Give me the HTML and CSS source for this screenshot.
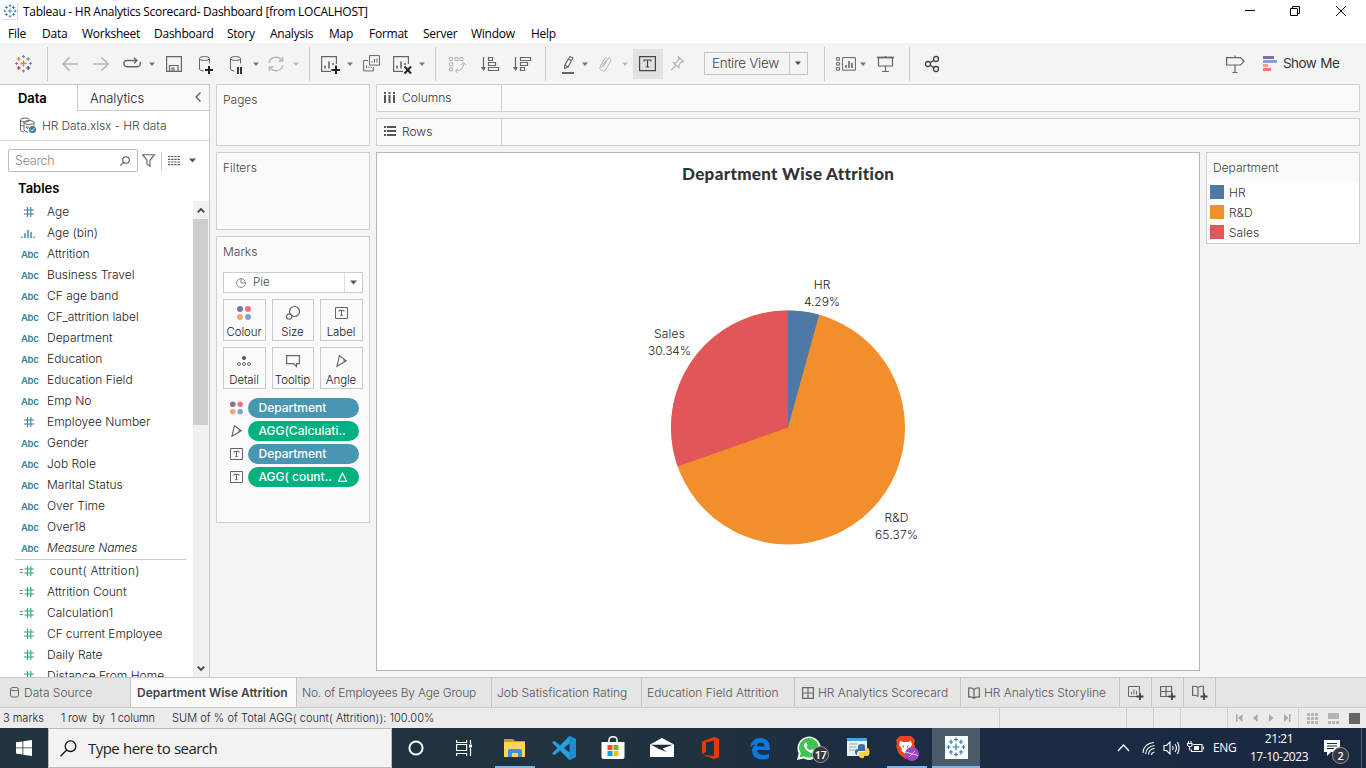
FILE: index.html
```html
<!DOCTYPE html>
<html lang="en">
<head>
<meta charset="utf-8">
<title>Tableau - HR Analytics Scorecard- Dashboard</title>
<link rel="stylesheet" href="styles.css">
</head>
<body>
<svg class="defs" width="0" height="0">
  <defs>
    <symbol id="caret" viewBox="0 0 6 20"><path d="M0 8.5h6l-3 3.5z" fill="currentColor"/></symbol>
    <symbol id="tbox" viewBox="0 0 13 12"><path d="M.5.5h12v11H.5z" fill="none" stroke="#666"/><path d="M4 4.6V3.4h5v1.2M6.5 3.4v5.2M5.3 8.6h2.4" fill="none" stroke="#666"/></symbol>
    <symbol id="dots" viewBox="0 0 14 14"><circle cx="3" cy="3" r="3" fill="#86709a"/><circle cx="11" cy="3" r="3" fill="#f8707e"/><circle cx="3" cy="11" r="3" fill="#f5a678"/><circle cx="11" cy="11" r="3" fill="#80a5cf"/></symbol>
    <symbol id="angle" viewBox="0 0 11 12"><path d="M3.4.7 10.3 5.800 .9 11.300zM7.900 4q.8 2-.4 3.700" fill="none" stroke="#666" stroke-width="1.1"/></symbol>
    <symbol id="hash" viewBox="0 0 10 10"><path d="M3.500 0v10M6.800 0v10M0 3h10M0 7h10" fill="none" stroke="currentColor" stroke-width="1.100"/></symbol>
    <symbol id="hasheq" viewBox="0 0 14 10"><path d="M7.500 0v10M10.800 0v10M4.500 3H14M4.500 7H14M0 3.500h3M0 6.500h3" fill="none" stroke="currentColor" stroke-width="1.100"/></symbol>
    <symbol id="bars" viewBox="0 0 14 10"><path d="M.8 8.500V10M4 5v5M7 2v8M10 4v6M13 8.500V10" fill="none" stroke="currentColor" stroke-width="1.400"/></symbol>
    <symbol id="book" viewBox="0 0 12 12"><path d="M6 2.500Q4 .7.700 1v9Q4 9.700 6 11.300 8 9.700 11.300 10V1Q8 .7 6 2.500zV11" fill="none" stroke="#666" stroke-width="1.200"/></symbol>
    <symbol id="gridico" viewBox="0 0 12 12"><path d="M.6.6h10.800v10.800H.6zM6 .6v10.800M.6 6h10.800" fill="none" stroke="#666" stroke-width="1.200"/></symbol>
    <symbol id="plusses" viewBox="0 0 20 20"><path d="M10 6.500v7M6.500 10h7M10 .500v4M8 2.500h4M10 15.500v4M8 17.500h4M2.500 8v4M.500 10h4M17.500 8v4M15.500 10h4M5 2.500v4.500M2.700 5h4.500M15 2.500v4.500M12.800 5h4.500M5 13v4.500M2.700 15h4.500M15 13v4.500M12.800 15h4.500" fill="none" stroke="currentColor" stroke-width="1.200"/></symbol>
  </defs>
</svg>

<header class="titlebar">
  <span class="app-icon"><svg width="14" height="14"><use href="#plusses"/></svg></span>
  <span class="title">Tableau - HR Analytics Scorecard- Dashboard [from LOCALHOST]</span>
  <svg class="winctl" width="104" height="12" fill="none" stroke="#000"><path d="M0 5.500h10M45.500 3.500h7v7h-7zM47.500 3.500v-2h7v7h-2M91 1l10 10M101 1 91 11"/></svg>
</header>
<nav class="menubar"><span>File</span><span>Data</span><span>Worksheet</span><span>Dashboard</span><span>Story</span><span>Analysis</span><span>Map</span><span>Format</span><span>Server</span><span>Window</span><span>Help</span></nav>

<div class="toolbar">
  <svg width="18" height="20" fill="none" stroke-width="1.100"><path d="M8.500 6.500v6M5.500 9.500h6" stroke="#e8762c" stroke-width="1.300"/><path d="M3.800 3v4M1.800 5h4" stroke="#e8762c"/><path d="M13.200 3v4M11.200 5h4" stroke="#5b8ba6"/><path d="M3.800 12v4M1.800 14h4" stroke="#c72037"/><path d="M13.200 12v4M11.200 14h4" stroke="#1f447e"/><path d="M8.500 1v3M7 2.500h3M8.500 15.500v3M7 17h3" stroke="#5b8ba6"/><path d="M1.500 8v3M0 9.500h3M15.500 8v3M14 9.500h3" stroke="#7b7fb0"/></svg>
  <i class="sep"></i>
  <svg class="pale" width="16" height="20"><path d="M16 10H1M7.500 3.500 1 10l6.500 6.500" stroke-width="1.500"/></svg>
  <svg class="pale" width="16" height="20"><path d="M0 10h15M8.500 3.500 15 10l-6.500 6.500" stroke-width="1.500"/></svg>
  <svg width="19" height="20"><path d="M14 12.800a3.100 3.100 0 0 0 2.800-4.800M14 12.800H4a3.100 3.100 0 0 1 0-6.300H13.500M11 3.700l3 2.800-3 2.800" stroke-width="1.400"/></svg>
  <svg class="car" width="6" height="20"><use href="#caret"/></svg>
  <svg width="16" height="20"><path d="M.6 2.600h14.800v14.800H.6zM3.500 17v-5.500h8.500V17M6 17v-3h2v3" stroke-width="1.200"/></svg>
  <svg width="16" height="20"><ellipse cx="6.500" cy="4.500" rx="5" ry="2"/><path d="M1.500 4.500v10.500q0 2 4 2M11.500 4.500v5"/><path d="M11 12v8M7 16h8" stroke="#222" stroke-width="2"/></svg>
  <svg width="16" height="20"><ellipse cx="6.500" cy="4.500" rx="5" ry="2"/><path d="M1.500 4.500v10.500q0 2 4 2M11.500 4.500v5"/><path d="M9 13v7M12 13v7" stroke="#222" stroke-width="1.800"/></svg>
  <svg class="car" width="6" height="20"><use href="#caret"/></svg>
  <svg class="pale" width="18" height="20"><path d="M2 9a7 6.500 0 0 1 13-2.500M15.800 3v4h-4M16 11a7 6.500 0 0 1-13 2.500M2.200 17v-4h4" stroke-width="1.300"/></svg>
  <svg class="car lite" width="6" height="20"><use href="#caret"/></svg>
  <i class="sep"></i>
  <svg width="20" height="20"><path d="M10 17.400H.6V2.600h14.800v7.500" stroke-width="1.200"/><path d="M4 14.500v-3M8 14.500v-7M12 11V9" stroke-width="1.600"/><path d="M15 11.500v8.500M10.500 16h8.500" stroke="#222" stroke-width="2"/></svg>
  <svg class="car" width="6" height="20"><use href="#caret"/></svg>
  <svg width="18" height="20"><path d="M6.500 1.600h10v9.500h-10zM5 6.500H.6v10.400h9.800V13M9 8.500V7M11.500 8.500V5M14 8.500v-4M3.500 14v-2.500M6 14v-1.500M8.300 14v-1"/></svg>
  <svg width="20" height="20"><path d="M10 17.400H.6V2.600h14.800v7.500" stroke-width="1.200"/><path d="M4 14.500v-3M8 14.500v-7M12 11V9" stroke-width="1.600"/><path d="m11.500 12.500 6.500 7M18 12.500l-6.500 7" stroke="#222" stroke-width="2"/></svg>
  <svg class="car" width="6" height="20"><use href="#caret"/></svg>
  <i class="sep"></i>
  <svg class="pale" width="17" height="20"><path d="M.6 3.500h3v3h-3zM6 3.500h3v3H6zM11 3.500h3v3h-3zM.6 8.800h3v3h-3zM.6 13.800h3v3h-3zM14.500 9.500q.5 6.500-7.500 7.500M12 11l2.500-2.500L17 11M9 14.300 6.500 17 9 19.500"/></svg>
  <svg width="19" height="20"><path d="M2.500 3v11M7.500 3.500h4v3h-4zM7.500 8.500h7v3h-7zM7.500 13.500h10v3h-10z" stroke-width="1.200"/><path d="M0 13h5l-2.500 4z" fill="#666" stroke="none"/></svg>
  <svg width="19" height="20"><path d="M2.500 3v11M7.500 3.500h10v3h-10zM7.500 8.500h7v3h-7zM7.500 13.500h4v3h-4z" stroke-width="1.200"/><path d="M0 13h5l-2.500 4z" fill="#666" stroke="none"/></svg>
  <i class="sep"></i>
  <svg width="14" height="20"><path d="M9 2.500 12 4 7 13l-3.500 1.500.3-3.500zM4 11l3 2M7.500 5l3.500 2" stroke-width="1.100"/><path d="M1 19h12" stroke-width="2"/></svg>
  <svg class="car" width="6" height="20"><use href="#caret"/></svg>
  <svg class="pale" width="14" height="20"><path d="m5 13 4.500-8q1.500-2 3 0 .8 1-.2 3l-4.500 7.500q-2 2.500-4.500 1-2.500-2-.8-4.500L6.500 5Q7.500 3 9 4M3.500 13.500 8 6" /></svg>
  <svg class="car lite" width="6" height="20"><use href="#caret"/></svg>
  <span class="toggled"><svg width="17" height="20"><path d="M.6 2.600h15.800v14H.6zM5 7.500V6h7v1.500M8.500 6v7M6.800 13h3.400" stroke-width="1.200"/></svg></span>
  <svg class="pale" width="13" height="20"><path d="m7.500 3 5 4.500-2 .3-2.500 3v3L2.200 8.800l3-.2L8 5.500zM4.800 11.500.5 16" stroke-width="1.200"/></svg>
  <span class="fit"><b class="ui">Entire View</b><em><svg class="car dark" width="6" height="20"><use href="#caret"/></svg></em></span>
  <i class="sep"></i>
  <svg width="20" height="20"><path d="M.6 3.600h3v2.600h-3zM.6 8.600h3v2.600h-3zM.6 13.600h3v2.600h-3zM6.600 3.600h12.800v12.600H6.600z"/><path d="M10 14v-3M13 14V7M16 14V9" stroke-width="1.600"/></svg>
  <svg class="car" width="6" height="20"><use href="#caret"/></svg>
  <svg width="17" height="20"><path d="M0 3.500h17" stroke-width="1.800"/><path d="M1.500 4v8h14V4M8.500 2v1M8.500 12v5.500M5 17.500h7" stroke-width="1.200"/></svg>
  <i class="sep"></i>
  <svg width="15" height="20"><g stroke="#444" stroke-width="1.300"><circle cx="3" cy="10" r="2.500"/><circle cx="11" cy="5" r="2.500"/><circle cx="11" cy="15" r="2.500"/><path d="m5.200 8.700 3.600-2.300M5.200 11.300l3.600 2.300"/></g></svg>
  <svg width="19" height="20"><path d="M.6 3.600h14L18 7.300 14.600 11H.6zM9 1.500v2M9 11v7.500M6.500 18.500h5" stroke-width="1.200"/></svg>
  <span class="showme"><svg width="15" height="20"><path d="M1 2h11v3H1z" fill="#86709a"/><path d="M1 6h14v3H1z" fill="#80a5cf"/><path d="M1 10h5v3H1z" fill="#f5a678"/><path d="M1 14h8v3H1z" fill="#f8707e"/></svg><b class="ui">Show Me</b></span>
</div>

<main class="workspace">
  <aside class="data-pane">
    <div class="pane-tabs"><b class="on ui">Data</b><span class="ui">Analytics</span><svg width="6" height="10"><path d="M5.500.500 1 5l4.500 4.500" fill="none" stroke="#555" stroke-width="1.200"/></svg></div>
    <div class="source"><svg width="17" height="17" fill="none" stroke="#666"><ellipse cx="5" cy="3" rx="4.500" ry="2"/><path d="M.5 3v10q0 1.500 3.500 2M.5 8q1 1 3 1"/><ellipse cx="9" cy="5.500" rx="5" ry="2"/><path d="M4 5.500V13q1 2 4 2M14 5.500V9M6 10h3M8 12l-2-2"/><circle cx="12.500" cy="12.500" r="3.600" fill="#3a7fa5" stroke="none"/><path d="m10.800 12.500 1.300 1.300 2.200-2.500" stroke="#fff"/></svg><span class="ui">HR Data.xlsx - HR data</span></div>
    <div class="find">
      <div class="box"><span class="ui">Search</span><svg width="10" height="10" fill="none" stroke="#555" stroke-width="1.100"><circle cx="6" cy="4" r="3.300"/><path d="M3.700 6.300.5 9.500"/></svg></div>
      <svg width="13" height="13" fill="none" stroke="#666" stroke-width="1.100"><path d="M.7.700h11.600L8 6.300v6L5 10V6.300z"/></svg>
      <i></i>
      <svg width="12" height="9" stroke="#555" stroke-width="1.200"><path d="M0 .5h12M0 3.300h12M0 6h12M0 8.700h12" stroke-dasharray="2.300 .9"/></svg>
      <svg class="down" width="7" height="5"><path d="M0 .5h7L3.500 4.500z" fill="#555"/></svg>
    </div>
    <h2 class="ui">Tables</h2>
    <div class="fields">
      <ul class="ui">
        <li class="dim"><svg width="10" height="10"><use href="#hash"/></svg>Age</li>
        <li class="dim"><svg width="14" height="10"><use href="#bars"/></svg>Age (bin)</li>
        <li><b>Abc</b>Attrition</li>
        <li><b>Abc</b>Business Travel</li>
        <li><b>Abc</b>CF age band</li>
        <li><b>Abc</b>CF_attrition label</li>
        <li><b>Abc</b>Department</li>
        <li><b>Abc</b>Education</li>
        <li><b>Abc</b>Education Field</li>
        <li><b>Abc</b>Emp No</li>
        <li class="dim"><svg width="10" height="10"><use href="#hash"/></svg>Employee Number</li>
        <li><b>Abc</b>Gender</li>
        <li><b>Abc</b>Job Role</li>
        <li><b>Abc</b>Marital Status</li>
        <li><b>Abc</b>Over Time</li>
        <li><b>Abc</b>Over18</li>
        <li><b>Abc</b><em>Measure Names</em></li>
        <li class="rule"></li>
        <li class="mea calc first"><svg width="14" height="10"><use href="#hasheq"/></svg>&nbsp;count( Attrition)</li>
        <li class="mea calc"><svg width="14" height="10"><use href="#hasheq"/></svg>Attrition Count</li>
        <li class="mea calc"><svg width="14" height="10"><use href="#hasheq"/></svg>Calculation1</li>
        <li class="mea tight"><svg width="10" height="10"><use href="#hash"/></svg>CF current Employee</li>
        <li class="mea"><svg width="10" height="10"><use href="#hash"/></svg>Daily Rate</li>
        <li class="mea"><svg width="10" height="10"><use href="#hash"/></svg>Distance From Home</li>
      </ul>
      <div class="scroll">
        <svg width="8" height="5"><path d="M.7 4.300 4 1l3.300 3.300" fill="none" stroke="#444" stroke-width="1.800"/></svg>
        <i></i>
        <svg width="8" height="5"><path d="M.7.700 4 4 7.300.700" fill="none" stroke="#444" stroke-width="1.800"/></svg>
      </div>
    </div>
  </aside>

  <section class="shelves ui">
    <div class="card pages">Pages</div>
    <div class="card filters">Filters</div>
    <div class="card marks">
      <h3>Marks</h3>
      <div class="marktype"><svg width="10" height="10" fill="none" stroke="#888"><circle cx="5" cy="5" r="4.400"/><path d="M5 1v4h4"/></svg><span>Pie</span><em><svg width="7" height="5"><path d="M0 .5h7L3.500 4.500z" fill="#555"/></svg></em></div>
      <div class="markgrid">
        <div><svg width="14" height="14"><use href="#dots"/></svg>Colour</div>
        <div><svg width="14" height="14" fill="none" stroke="#666" stroke-width="1.200"><circle cx="8.500" cy="5.500" r="5"/><circle cx="3.200" cy="10.500" r="2.700" fill="#fafafa"/></svg>Size</div>
        <div><svg width="13" height="14"><use href="#tbox"/></svg>Label</div>
        <div><svg width="14" height="14" fill="none" stroke="#666"><circle cx="7" cy="4" r="2" fill="#555" stroke="none"/><circle cx="2" cy="10" r="1.500"/><circle cx="7" cy="10" r="1.500"/><circle cx="12" cy="10" r="1.500"/></svg>Detail</div>
        <div><svg width="14" height="14" fill="none" stroke="#666" stroke-width="1.200"><path d="M.6 1.600h12.800v8H10.500v3L7.500 9.600H.6z"/></svg>Tooltip</div>
        <div><svg width="11" height="14"><use href="#angle"/></svg>Angle</div>
      </div>
      <div class="pill"><svg width="15" height="14"><use href="#dots"/></svg><span class="blue">Department</span></div>
      <div class="pill"><svg width="11" height="12"><use href="#angle"/></svg><span>AGG(Calculati..</span></div>
      <div class="pill"><svg width="13" height="12"><use href="#tbox"/></svg><span class="blue">Department</span></div>
      <div class="pill"><svg width="13" height="12"><use href="#tbox"/></svg><span>AGG( count..<svg width="9" height="10"><path d="M4.500 1 8.500 9.300H.500z" fill="none" stroke="#fff" stroke-width="1.200"/></svg></span></div>
    </div>
  </section>

  <section class="canvas">
    <div class="shelf ui"><div><svg width="12" height="11" fill="#555"><path d="M0 0h2v2H0zM4.500 0h2v2h-2zM9 0h2v2H9zM0 3h2v8H0zM4.500 3h2v8h-2zM9 3h2v8H9z"/></svg>Columns</div></div>
    <div class="shelf ui"><div><svg width="12" height="11" fill="#555"><path d="M0 0h2v2H0zM0 4h2v2H0zM0 8h2v2H0zM3 0h9v2H3zM3 4h9v2H3zM3 8h9v2H3z"/></svg>Rows</div></div>
    <div class="viewrow">
      <div class="view">
        <svg width="822" height="517" viewBox="377 153 822 517">
          <text class="charttitle" x="788" y="180" textLength="212">Department Wise Attrition</text>
          <circle cx="788" cy="427.500" r="117" fill="#f28e2b"/>
          <path d="M788 427.500V310.500A117 117 0 0 1 819.150 314.720z" fill="#4e79a7"/>
          <path d="M788 427.500 677.730 466.500A117 117 0 0 1 788 310.500z" fill="#e15759"/>
          <g class="ui lab">
            <text x="822" y="289">HR</text><text x="822" y="306" textLength="36">4.29%</text>
            <text x="669.500" y="338" textLength="31">Sales</text><text x="669.500" y="355" textLength="43">30.34%</text>
            <text x="896.500" y="522" textLength="24">R&amp;D</text><text x="896.500" y="539" textLength="43">65.37%</text>
          </g>
        </svg>
      </div>
      <div class="legend ui"><h3>Department</h3><p><i class="c1"></i><span>HR</span></p><p><i class="c2"></i><span>R&amp;D</span></p><p><i class="c3"></i><span>Sales</span></p></div>
    </div>
  </section>
</main>

<div class="sheets ui">
  <span><svg width="9" height="12" fill="none" stroke="#666"><rect x=".5" y=".5" width="8" height="9.500" rx="2"/><path d="M.5 3q4 1.500 8 0"/></svg>Data Source</span>
  <span class="on">Department Wise Attrition</span>
  <span class="emp">No. of Employees By Age Group</span>
  <span>Job Satisfication Rating</span>
  <span>Education Field Attrition</span>
  <span class="dash"><svg width="12" height="12"><use href="#gridico"/></svg>HR Analytics Scorecard</span>
  <span class="dash"><svg width="12" height="12"><use href="#book"/></svg>HR Analytics Storyline</span>
  <span class="add"><svg width="16" height="16"><path d="M9 11.500H.500V1.500h11V8M3.500 9.500V7M6 9.500V4.500M8.500 9.500V6" fill="none" stroke="#666"/><path d="M12 8v7M8.500 11.500h7" stroke="#444" stroke-width="1.800"/></svg></span>
  <span class="add"><svg width="16" height="16"><path d="M9 11.500H.600V1.500h11V8M6 1.500v10M.6 6.500h11" fill="none" stroke="#666" stroke-width="1.200"/><path d="M12 8v7M8.500 11.500h7" stroke="#444" stroke-width="1.800"/></svg></span>
  <span class="add"><svg width="16" height="16"><path d="M6 2.500Q4 1 .6 1.300v9Q4 10 6 11.500M6 2.500Q8 1 11.400 1.300V8M6 2.500v9" fill="none" stroke="#666" stroke-width="1.200"/><path d="M12 8v7M8.500 11.500h7" stroke="#444" stroke-width="1.800"/></svg></span>
</div>
<div class="status ui">
  <span class="s1">3 marks</span><span class="s2">1 row&nbsp; by&nbsp; 1 column</span><span class="s3">SUM of % of Total AGG( count( Attrition)): 100.00%</span>
  <div class="cells"><i></i><i></i><i></i><i></i>
    <i><svg width="56" height="8" fill="#aaa"><path d="M0 0h1.500v8H0zM6.500 0v8L2 4zM21.500 0v8L17 4zM33 0v8l4.500-4zM48 0v8l4.500-4zM53 0h1.500v8H53z"/></svg></i>
    <i><svg width="54" height="11"><path d="M0 0h3v3H0zM4 0h3v3H4zM8 0h3v3H8zM0 4h3v3H0zM4 4h3v3H4zM8 4h3v3H8zM0 8h3v3H0zM4 8h3v3H4zM8 8h3v3H8zM21 0h11v6H21zM21 8h3v3h-3zM25 8h3v3h-3zM29 8h3v3h-3z" fill="#b5b5b5"/><path d="M42 0h11v11H42z" fill="#666"/></svg></i>
  </div>
</div>

<footer class="taskbar">
  <div class="start"><svg width="16" height="16" fill="#fff"><path d="M0 2.300 6.500 1.400v6.100H0zM7.300 1.300 16 0v7.500H7.300zM0 8.300h6.500v6.200L0 13.600zM7.300 8.300H16V16l-8.700-1.300z"/></svg></div>
  <div class="search"><svg width="17" height="17" fill="none" stroke="#111" stroke-width="1.300"><circle cx="10.500" cy="6.200" r="5.300"/><path d="M6.700 10 .5 16.200"/></svg><span>Type here to search</span></div>
  <div class="apps">
    <div><svg width="16" height="16"><circle cx="8" cy="8" r="6.600" fill="none" stroke="#fff" stroke-width="2"/></svg></div>
    <div class="taskview"><svg width="17" height="16" fill="none" stroke="#fff" stroke-width="1.200"><path d="M.6 0v2.500h10V0M.6 4.500h10v6H.6zM.6 16v-2.500h10V16M14.500 0v4M14.500 8v8"/><path d="M13 4.500h3v3h-3z" fill="#fff" stroke="none"/></svg></div>
    <div class="run"><svg width="24" height="24"><path d="M1 3h9l2 2h10v3H1z" fill="#d79b13"/><path d="M1 6h21v15H1z" fill="#ffd65c"/><path d="M5 21v-6q0-2 2-2h10q2 0 2 2v6h-4v-4H9v4z" fill="#3c93dc"/></svg></div>
    <div><svg width="24" height="24"><path d="M17.500 0 24 3v18l-6.500 3L8 14.500 2.500 19 0 17.500 5.500 12 0 6.500 2.500 5 8 9.500zM18 7l-6 5 6 5z" fill="#249fe3"/><path d="M17.500 0 24 3v18l-6.500 3z" fill="#1e8bd0"/></svg></div>
    <div><svg width="24" height="24"><path d="M8 7V4q0-3.300 4-3.300T16 4v3" fill="none" stroke="#fff" stroke-width="1.500"/><path d="M.5 6h23v15q0 2-2 2h-19q-2 0-2-2z" fill="#fff"/><path d="M6.500 9h5v5h-5z" fill="#f04e1f"/><path d="M12.500 9h5v5h-5z" fill="#7db700"/><path d="M6.500 15h5v5h-5z" fill="#00a3ee"/><path d="M12.500 15h5v5h-5z" fill="#ffb800"/></svg></div>
    <div><svg width="24" height="24"><path d="M0 8.500 12 2l12 6.500V21H0z" fill="#fff"/><path d="M1 8.800h22L12.500 12.500l4 3.500L9 13z" fill="#1e2f3c"/></svg></div>
    <div><svg width="22" height="24"><path d="M2 5.500 14 1l5 1.700v18.600L14 23 2 18.500l12 1.500V4.500L6 6.500V16l-4 2z" fill="#e03c05"/></svg></div>
    <div><svg width="24" height="24"><path d="M2 11.500Q3.500 2 12.500 2 22 2.500 22 12v2H9q.5 5 6.500 5 3.300 0 5.500-1.500V22q-3 1.500-7 1.500Q4.500 23 4 15q0-4 4-6.500Q4.500 8.500 2 11.500zM9 10.500h7.500q0-4-3.700-4T9 10.500z" fill="#0a79dc"/></svg></div>
    <div class="wa"><svg width="24" height="24"><path d="M0 24 1.700 17.500A11.700 11.700 0 1 1 6.500 22.500z" fill="#fff"/><path d="m2.500 21.500 1.300-4.300a9.700 9.700 0 1 1 3.300 3z" fill="#3fc351"/><path d="M8.500 6.500q-2 1-1.500 3.500 1.500 5 7 7 3 .5 4-2l-3-2-1.500 1.500q-3-1-4-4l1-1.500-1.200-2.500z" fill="#fff"/></svg><b>17</b></div>
    <div><svg width="24" height="24"><path d="M1 2h20v18H1z" fill="#e8f0f5"/><path d="M1 2h20v3H1z" fill="#4aa3dc"/><path d="M3 8h8M3 11h7M3 14h6" stroke="#9aa"/><path d="M12 15V10q0-2 4-2 3 0 3 2v5h-6q-2 0-2 4-2.500-1-2-4 0-2 3-2z" fill="#3870a5"/><path d="M19 12h2q2.500 0 2.500 4T21 20h-3v1.500q-1.500 1.500-4 0-1.500-.5-1-4 0-1.500 2-1.500h4z" fill="#fbd043"/></svg></div>
    <div class="run"><svg width="24" height="24"><path d="M5 0h11l4 4-1 4 1 2-3 8-6.500 5L4 18 1 10l1-2-1-4z" fill="#f1451f"/><path d="m5 5 3 1h5l3-1 1 4-3 4 .5 2-4 3-4-3L7 13 4 9z" fill="#fff"/><path d="m7 9 2 1-.5 2zM14 9l-2 1 .5 2z" fill="#f1451f"/><circle cx="17" cy="18" r="7" fill="#9b47c7"/><path d="M10.500 16 23 19.500M14 21l6-6" stroke="#f5b8e8"/></svg></div>
    <div class="active"><span><svg width="20" height="20"><use href="#plusses"/></svg></span></div>
  </div>
  <div class="tray">
    <svg width="100" height="18" fill="none" stroke="#fff" stroke-width="1.300"><path d="m1 12 5.500-6 5.500 6"/><path d="M26 14Q26.500 4.500 37 3.500M28.500 15Q29.500 7.500 37.500 6.500M31.500 15.500q.5-5.500 6-6M34.500 16q0-2.500 3-3" stroke-width="1.100"/><path d="M47 6.500h2.500L53 3v12l-3.500-3.500H47zM55.500 7q1.500 2 0 4M58 5q3 4 0 8M60.500 3q3 6 0 12" stroke-width="1.100"/><path d="M76 5.500h9v7H74.500V10.500M86.500 7.500v3M71.500 2v2M74 2v2M70.500 4.500H75v2q-2.200 2.500-4.500 0zM72.700 8v3.500" stroke-width="1.100"/><path d="M77 7h5v4h-5z" fill="#fff" stroke="none"/></svg>
    <span class="lang">ENG</span>
    <span class="clock">21:21<br>17-10-2023</span>
    <span class="note"><svg width="17" height="17"><path d="M0 0h16v12H7l-4 4v-4H0z" fill="#fff"/><path d="M3 3.500h10M3 6h10M3 8.500h7" stroke="#1b2a40"/></svg><b>2</b></span>
    <i></i>
  </div>
</footer>
</body>
</html>
```

FILE: styles.css
```css
* { box-sizing: border-box; }
body { margin: 0; width: 1366px; height: 768px; overflow: hidden; background: #f4f4f4; font: 12px/1 "Open Sans", "Noto Sans", sans-serif; color: #000; display: flex; flex-direction: column; }
svg { display: block; flex: none; overflow: visible; }
h2, h3, p, ul { margin: 0; padding: 0; }
i, em { font-style: normal; }
.defs { position: absolute; }
.ui { font-family: Inter, Roboto, sans-serif; font-weight: 300; }

.titlebar { height: 22px; background: #fff; display: flex; align-items: center; padding: 0 17px 0 3px; font-size: 12px; letter-spacing: -.27px; }
.app-icon { width: 15px; height: 17px; margin-right: 5px; padding-top: 1px; border: 1px solid #ddd; border-left: 0; border-top: 0; color: #2c7fb0; }
.title { padding-top: 2px; }
.winctl { margin-left: auto; }
.menubar { height: 21px; background: #fff; display: grid; grid-template-columns: 34px 40px 72px 73px 43px 59px 40px 54px 48px 60px 40px; align-items: center; padding: 2px 0 0 8px; font-size: 12px; letter-spacing: -.25px; }

.toolbar { height: 41px; padding: 11px 0 0 15px; display: grid; align-items: start; grid-template-columns: 32px 15px 31px 30px 26px 17px 32px 31px 24px 14px 26px 16px 12px 26px 16px 30px 26px 16px 14px 32px 32px 32px 16px 21px 16px 24px 11px 38px 33px 120px 12px 24px 17px 32px 16px 301px 36px 100px; }
.toolbar svg { fill: none; stroke: #666; }
.toolbar svg.pale { stroke: #b5b5b5; }
.toolbar svg.car { stroke: none; color: #777; }
.toolbar svg.lite { color: #bbb; }
.toolbar svg.dark { color: #444; }
.sep { width: 1px; height: 34px; margin-top: -7px; background: #ccc; }
.toggled { width: 30px; height: 30px; margin-top: -5px; padding: 5px 0 0 6px; background: #e1e1e1; }
.toolbar .toggled svg { stroke: #444; }
.fit { width: 104px; height: 23px; margin-top: -2px; border: 1px solid #c4c4c4; display: flex; align-items: center; color: #444; }
.fit b { font-size: 13.500px; font-weight: 300; padding: 1px 0 0 7px; flex: 1; letter-spacing: -.3px; }
.fit em { width: 18px; height: 21px; border-left: 1px solid #ccc; padding-left: 5px; }
.showme { display: flex; align-items: center; gap: 6px; }
.toolbar .showme svg { stroke: none; }
.showme b { font-size: 13.500px; font-weight: 400; color: #333; letter-spacing: -.7px; word-spacing: 1px; letter-spacing: -.6px; }

.workspace { height: 593px; display: flex; }
.data-pane { width: 210px; background: #fff; border: solid #c9c9c9; border-width: 1px 1px 0 0; display: flex; flex-direction: column; }
.pane-tabs { height: 26px; display: flex; flex: none; font-size: 13px; line-height: 26px; letter-spacing: -.1px; }
.pane-tabs .on { width: 77px; padding-left: 18px; font-weight: 600; }
.pane-tabs span { flex: 1; padding-left: 12px; background: #fafafa; border: solid #ccc; border-width: 0 0 1px 1px; color: #222; }
.pane-tabs svg { margin: 7px 8px 0 -14px; }
.source { height: 30px; flex: none; border-bottom: 1px solid #ddd; display: flex; align-items: center; padding-left: 20px; gap: 5px; font-size: 12px; color: #444; letter-spacing: -.1px; }
.find { height: 40px; flex: none; padding: 8px 0 9px 8px; display: flex; align-items: center; }
.find .box { width: 130px; height: 23px; border: 1px solid #bbb; border-radius: 2px; display: flex; align-items: center; justify-content: space-between; padding: 1px 7px 0 6px; color: #888; font-size: 12.500px; letter-spacing: -.25px; margin-right: 4px; }
.find i { width: 1px; height: 18px; background: #ccc; margin: 0 6px 0 6px; }
.find .down { margin-left: 9px; }
h2 { height: 20px; flex: none; font-size: 13px; padding-left: 18px; font-weight: 600 !important; line-height: 15px; }
.fields { flex: 1; min-height: 0; display: flex; }
.fields ul { width: 193px; height: 476px; overflow: hidden; list-style: none; font-size: 12px; color: #222; }
.fields li { height: 21px; line-height: 21px; display: flex; align-items: center; padding-left: 21px; white-space: nowrap; }
.fields li b { width: 26px; font-size: 9.500px; font-weight: 600; color: #3a7f9c; padding-top: 1px; letter-spacing: -.3px; }
.fields li em { font-style: italic; letter-spacing: -.15px; }
.fields li svg { width: 10px; margin: 0 13px 0 3px; color: #3a7f9c; }
.fields li svg[width="14"] { width: 14px; margin: 0 12px 0 0; }
.fields li.mea svg { color: #35a083; }
.fields li.calc svg[width="14"] { margin: 0 13px 0 -1px; }
.fields li.first { letter-spacing: .25px; }
.fields li.first svg[width="14"] { margin-right: 12px; }
.fields li.tight { letter-spacing: -.1px; }
.fields li.rule { height: 2px; margin: 1px 7px -1px 15px; border-top: 1px solid #ccc; padding: 0; }
.scroll { width: 16px; background: #f0f0f0; display: flex; flex-direction: column; align-items: center; padding: 7px 1px 6px 0; }
.scroll i { width: 15px; height: 206px; margin-top: 6px; background: #cdcdcd; }
.scroll svg:last-child { margin-top: auto; }

.shelves { width: 154px; margin: 0 6px; display: flex; flex-direction: column; gap: 6px; font-size: 12px; color: #444; }
.card { border: 1px solid #d0d0d0; background: #fafafa; padding: 9px 6px; }
.pages { height: 62px; }
.filters { height: 78px; }
.marks { height: 287px; display: flex; flex-direction: column; }
h3 { font-size: 12px; font-weight: inherit; }
.marktype { height: 21px; flex: none; margin: 14px 0 6px; border: 1px solid #ccc; background: #fff; display: flex; align-items: center; padding-left: 12px; gap: 7px; font-size: 11.500px; }
.marktype span { flex: 1; padding-top: 1px; }
.marktype em { width: 18px; height: 19px; border-left: 1px solid #ddd; padding: 7px 0 0 5px; }
.markgrid { display: grid; grid-template-columns: 43px 42px 43px; gap: 6px; margin-bottom: 9px; }
.markgrid div { height: 42px; border: 1px solid #ccc; display: flex; flex-direction: column; align-items: center; padding: 6px 1px 0 0; gap: 7px; font-size: 11.500px; letter-spacing: -.1px; color: #222; }
.pill { height: 20px; margin-bottom: 3px; display: flex; align-items: center; padding-left: 7px; }
.pill > svg { width: 13px; margin-right: 5px; }
.pill span { width: 111px; height: 20px; border-radius: 10px; background: #00b180; color: #fff; font-size: 12px; font-weight: 500; display: flex; align-items: center; justify-content: space-between; padding: 0 12px 0 10.500px; letter-spacing: -.02px; }
.pill .blue { background: #4996b2; }

.canvas { width: 984px; display: flex; flex-direction: column; gap: 6px; }
.shelf { height: 28px; border: 1px solid #d0d0d0; background: #fafafa; font-size: 12px; color: #333; }
.shelf div { width: 125px; height: 26px; border-right: 1px solid #d0d0d0; display: flex; align-items: center; gap: 6px; padding-left: 7px; }
.shelf svg { margin-top: -1px; }
.viewrow { display: flex; gap: 6px; align-items: flex-start; }
.view { width: 824px; height: 519px; border: 1px solid #b5b5b5; background: #fff; }
.charttitle { font: 900 17px Lato, sans-serif; font-variant-ligatures: none; fill: #333; text-anchor: middle; }
.lab { font-size: 12px; fill: #222; text-anchor: middle; }
.legend { width: 154px; height: 92px; border: 1px solid #d0d0d0; background: #fff; font-size: 12px; color: #333; }
.legend h3 { height: 29px; padding: 9px 6px; background: #fafafa; color: #444; }
.legend p { height: 20px; display: flex; align-items: center; gap: 5px; padding-left: 3px; }
.legend p span { padding-top: 1px; }
.legend i { width: 14px; height: 14px; }
.c1 { background: #4e79a7; }
.c2 { background: #f28e2b; }
.c3 { background: #e15759; }

.sheets { height: 31px; background: #e5e5e5; border: solid #c9c9c9; border-width: 1px 0; display: grid; grid-template-columns: 131px 166px 195px 150px 153px 166px 159px 32px 32px 32px; font-size: 12px; color: #555; }
.sheets span { border-right: 1px solid #c4c4c4; display: flex; align-items: center; padding-left: 5px; gap: 5px; white-space: nowrap; }
.sheets span:first-child { padding-left: 10px; }
.sheets .on { background: #fafafa; font-weight: 600; padding-left: 6px; color: #444; }
.sheets .emp { letter-spacing: -.2px; }
.sheets .dash { padding-left: 7px; gap: 4px; letter-spacing: -.05px; }
.sheets .add { padding-left: 8px; }
.status { height: 20px; background: #ebebeb; display: flex; align-items: center; font-size: 11px; color: #222; white-space: nowrap; }
.s1 { width: 61px; padding-left: 3px; }
.s2 { width: 111px; letter-spacing: -.15px; }
.s3 { letter-spacing: .06px; }
.cells { margin-left: auto; height: 20px; display: grid; grid-template-columns: 127px 27px 27px 47px 71px 68px; }
.cells i { border-left: 1px solid #ccc; display: flex; align-items: center; padding-left: 8px; }

.taskbar { height: 40px; background: linear-gradient(90deg, #22353e, #20323f 50%, #1b2b44 70%, #1a2940); display: flex; color: #fff; }
.start { width: 48px; padding: 12px 0 0 16px; }
.search { width: 344px; background: #f2f2f2; border: 1px solid #bbb; display: flex; align-items: center; padding-left: 11px; gap: 11px; color: #222; font-size: 15px; letter-spacing: -.55px; word-spacing: .5px; }
.apps { display: grid; grid-template-columns: 48px 50px repeat(10, 49px); }
.apps div { display: flex; align-items: center; justify-content: center; position: relative; }
.apps .taskview { padding-right: 2px; }
.apps .run::after { content: ""; position: absolute; left: 5px; right: 4px; bottom: 0; height: 2px; background: #76b9ed; }
.apps .active { background: #4b5a68; border-bottom: 2px solid #76b9ed; color: #2c7fb0; margin-left: 1px; }
.active span { width: 23px; height: 23px; background: #fff; padding: 1.500px; }
.wa b, .note b { position: absolute; width: 17px; height: 17px; border-radius: 50%; background: #33383d; border: 1px solid #999; font-size: 11px; font-weight: 600; text-align: center; line-height: 15px; letter-spacing: -.5px; }
.wa b { left: 28px; top: 18px; }
.tray { margin-left: auto; display: flex; align-items: center; }
.lang { margin-left: -4px; width: 36px; font-size: 12px; letter-spacing: -.3px; }
.clock { width: 60px; text-align: center; line-height: 18px; letter-spacing: -.45px; white-space: nowrap; }
.note { width: 20px; margin: 0 17px 0 15px; position: relative; }
.note b { left: 8px; top: 7px; }
.tray i { width: 1px; height: 40px; margin-right: 4px; background: #55636f; }
```
